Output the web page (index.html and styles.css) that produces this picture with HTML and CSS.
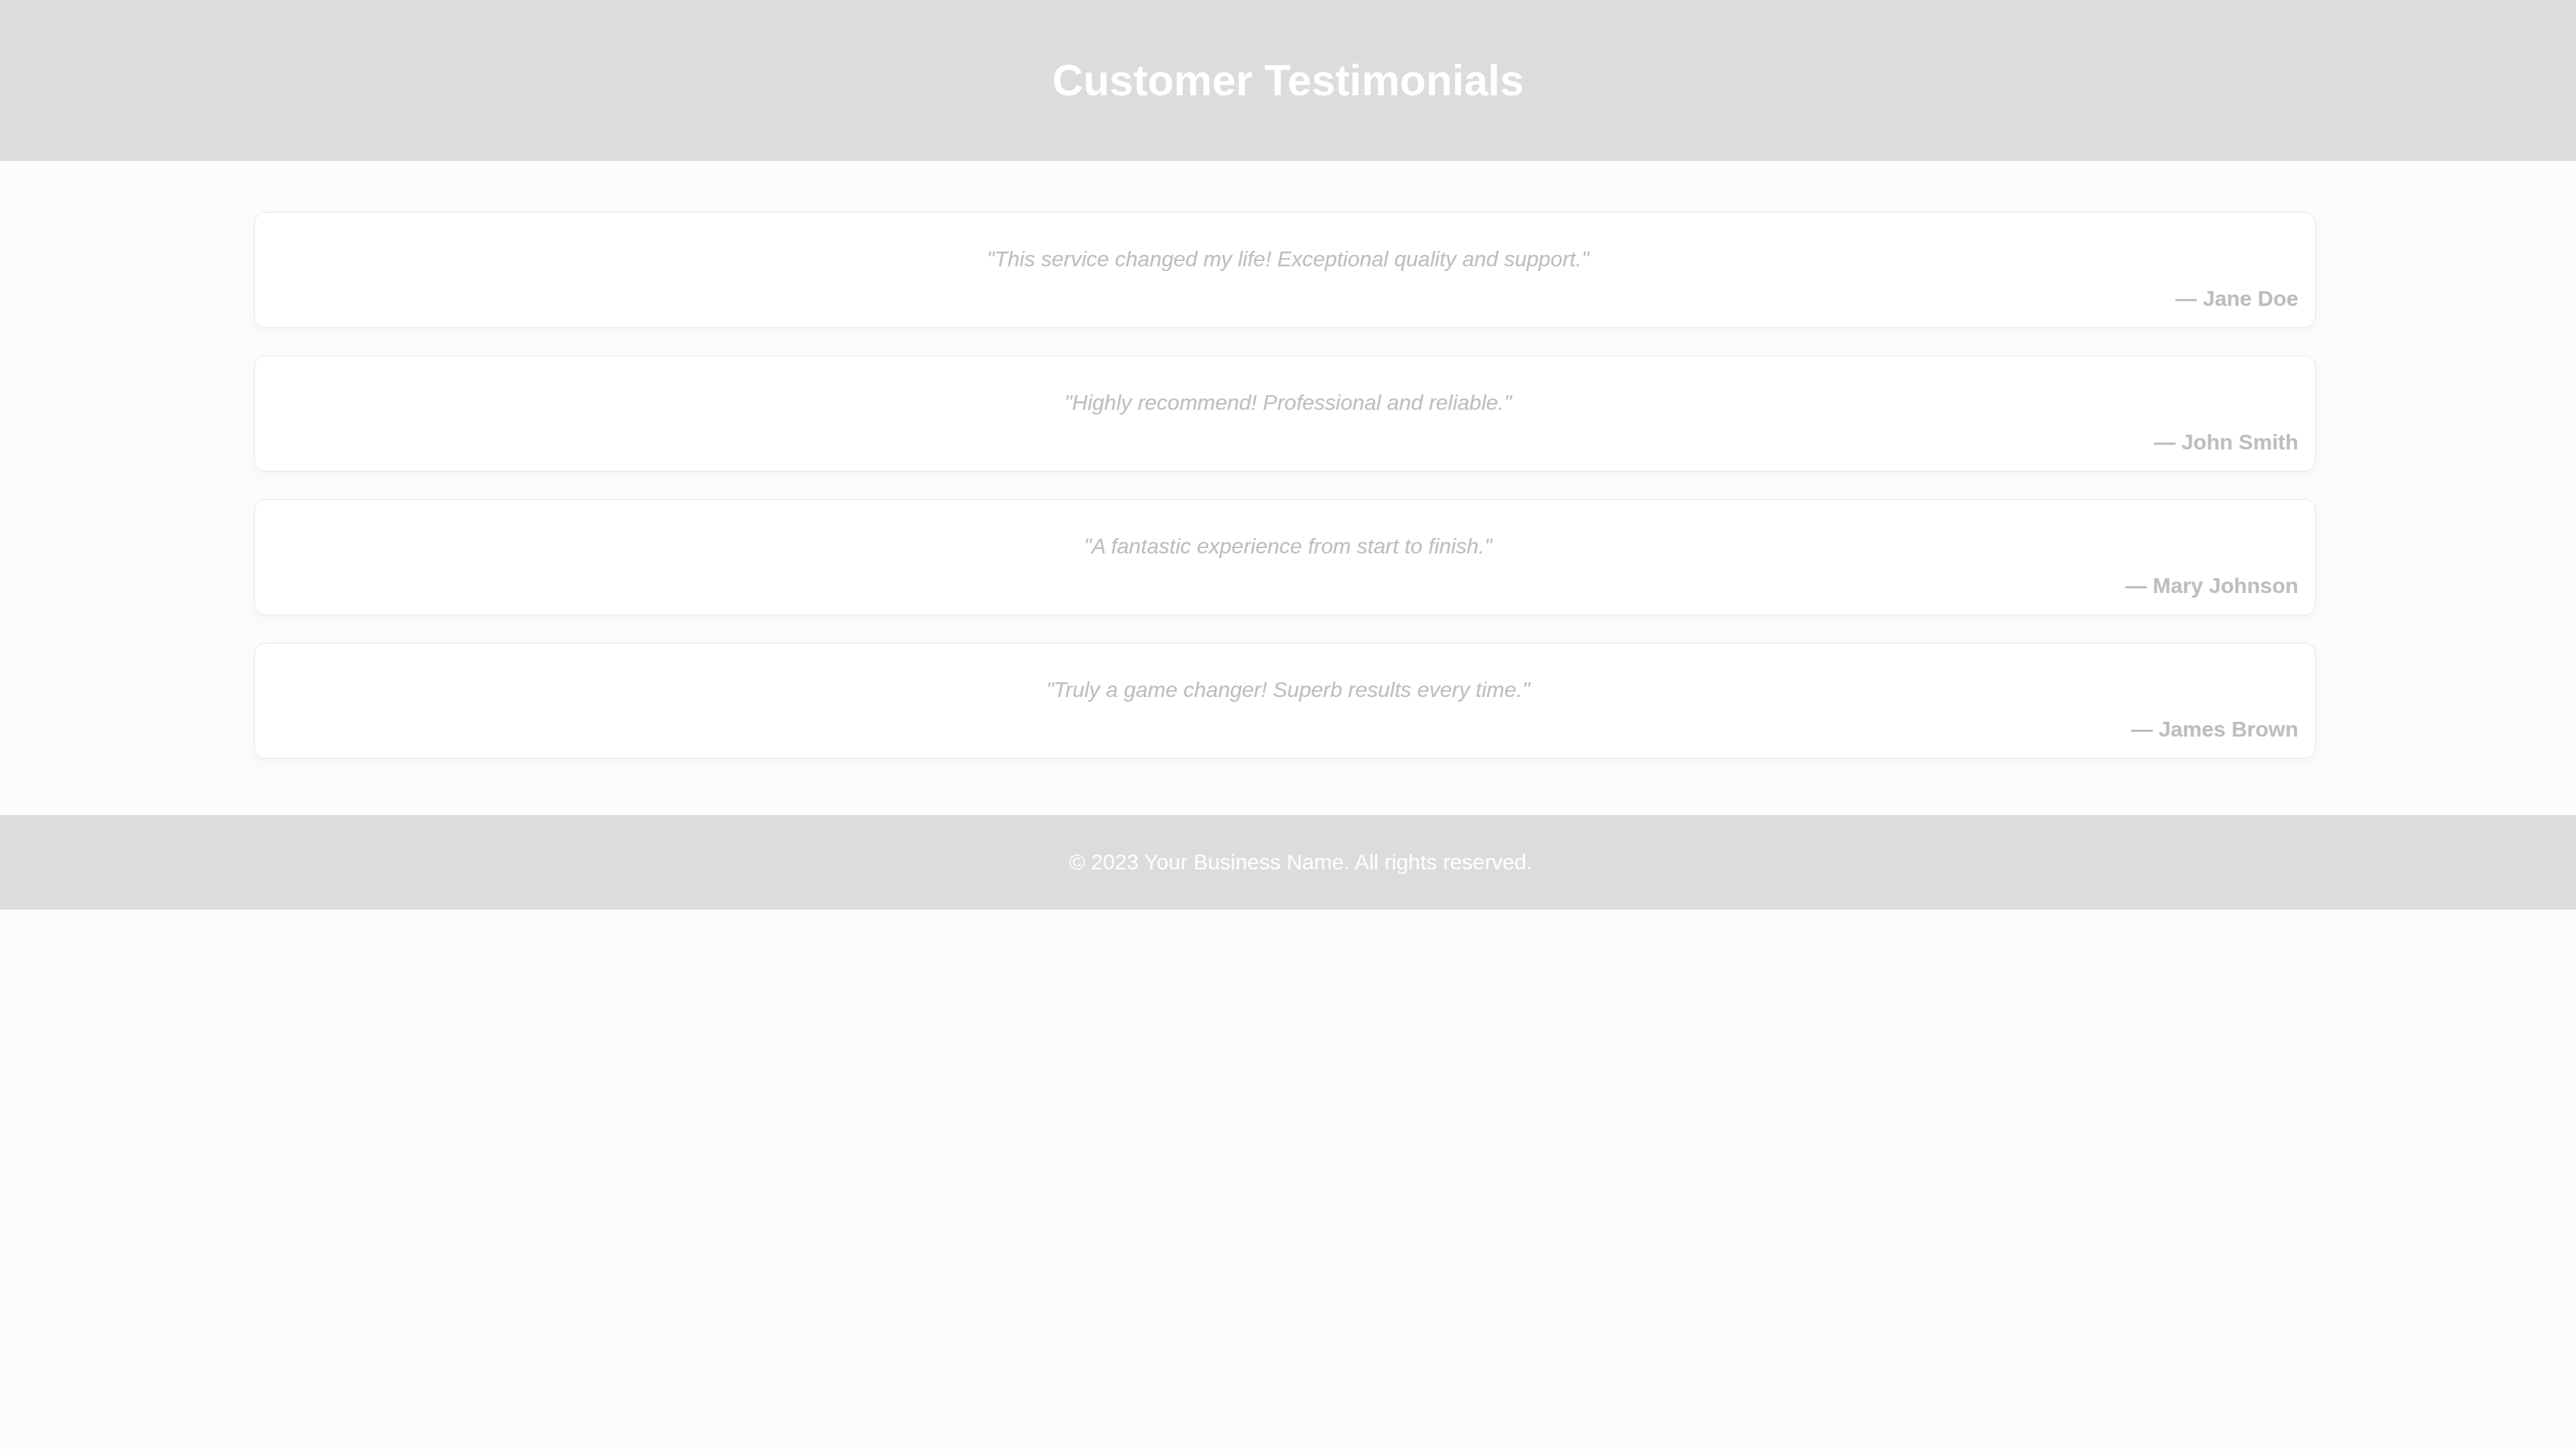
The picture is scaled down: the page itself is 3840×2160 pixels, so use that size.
FILE: index.html
```html
<!DOCTYPE html>
<html lang="en">
<head>
<meta charset="utf-8">
<title>Customer Testimonials</title>
<link rel="stylesheet" href="styles.css">
</head>
<body>
<header class="site-header">
  <h1 class="site-title">Customer Testimonials</h1>
</header>
<main class="testimonials">
  <div class="testimonial">
    <p class="quote">"This service changed my life! Exceptional quality and support."</p>
    <p class="author">— Jane Doe</p>
  </div>
  <div class="testimonial">
    <p class="quote">"Highly recommend! Professional and reliable."</p>
    <p class="author">— John Smith</p>
  </div>
  <div class="testimonial">
    <p class="quote">"A fantastic experience from start to finish."</p>
    <p class="author">— Mary Johnson</p>
  </div>
  <div class="testimonial">
    <p class="quote">"Truly a game changer! Superb results every time."</p>
    <p class="author">— James Brown</p>
  </div>
</main>
<footer class="site-footer">
  <p class="footer-text">© 2023 Your Business Name. All rights reserved.</p>
</footer>
</body>
</html>
```

FILE: styles.css
```css
html, body {
  margin: 0;
  padding: 0;
}

body {
  background: #fcfcfc;
  font-family: "Liberation Sans", Arial, sans-serif;
  font-size: 32px;
  min-height: 2160px;
}

.site-header {
  background: #dcdcdc;
  height: 240px;
  display: flex;
  align-items: center;
  justify-content: center;
}

.site-title {
  margin: 0;
  color: #ffffff;
  font-size: 64px;
  font-weight: bold;
  line-height: 74px;
}

.testimonials {
  width: 3073px;
  margin: 0 0 0 379px;
  padding: 76px 0 84px;
  display: flex;
  flex-direction: column;
  gap: 41px;
}

.testimonial {
  background: #ffffff;
  border: 1px solid #e4e4e4;
  border-radius: 16px;
  box-shadow: 0 6px 18px rgba(0, 0, 0, 0.035);
  padding: 24px 25px 24px 34px;
}

.quote {
  margin: 27px 0 22px;
  text-align: center;
  font-style: italic;
  color: #bdbdbd;
  line-height: 37px;
}

.author {
  margin: 0;
  text-align: right;
  font-weight: bold;
  color: #bdbdbd;
  line-height: 37px;
}

.site-footer {
  background: #dcdcdc;
  height: 141px;
  padding-left: 38px;
  display: flex;
  align-items: center;
  justify-content: center;
}

.footer-text {
  margin: 0;
  color: #ffffff;
  line-height: 37px;
}
```
